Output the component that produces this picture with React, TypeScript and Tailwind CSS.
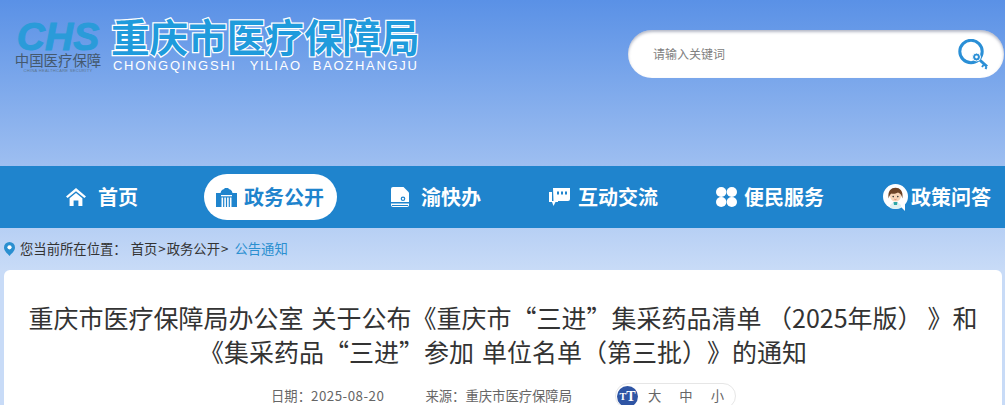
import React from "react";

const cjk = "font-['Microsoft_YaHei','Noto_Sans_CJK_SC',sans-serif]";

function HomeIcon() {
  return (
    <svg width="20" height="18" viewBox="0 0 20 18" fill="#fff">
      <path d="M10 0 L20 8.4 L18.4 10 L10 3.2 L1.6 10 L0 8.4 Z" />
      <path d="M3.6 10.2 L10 5 L16.4 10.2 V18 H12.4 V12.6 H7.6 V18 H3.6 Z" />
    </svg>
  );
}
function GovIcon() {
  return (
    <svg width="21" height="19" viewBox="0 0 21 19" fill="#1f84cd">
      <path d="M0 5 H4.5 C5 2 7 .8 10.5 .8 C14 .8 16 2 16.5 5 H21 V19 H0 Z" />
      <path d="M8.5 0 h4 v2 h-4 Z" />
      <g fill="#fff">
        <rect x="5" y="7" width="11" height="1.3" />
        <rect x="5.5" y="9.5" width="1.6" height="9.5" />
        <rect x="8.3" y="9.5" width="1.6" height="9.5" />
        <rect x="11.1" y="9.5" width="1.6" height="9.5" />
        <rect x="13.9" y="9.5" width="1.6" height="9.5" />
      </g>
    </svg>
  );
}
function DocIcon() {
  return (
    <svg width="18" height="20" viewBox="0 0 18 20" fill="#fff">
      <path d="M2 0 H12.5 L18 5.5 V15 H0 V2 A2 2 0 0 1 2 0 Z" />
      <circle cx="12" cy="11.8" r="2.3" fill="#1f84cd" />
      <circle cx="12" cy="11.8" r="1.1" fill="#fff" />
      <path d="M0 16.5 H18 V18 A2 2 0 0 1 16 20 H2 A2 2 0 0 1 0 18 Z" />
      <rect x="1" y="18" width="16" height="1" fill="#1f84cd" />
    </svg>
  );
}
function ChatIcon() {
  return (
    <svg width="21" height="18" viewBox="0 0 21 18" fill="#fff">
      <path d="M4 0 H21 V11 A2 2 0 0 1 19 13 H10 L4.5 13 Z" />
      <path d="M0 4 H3 V13 L9 13 L9 14 H6.5 L4.5 18 L3 14 H0 Z" />
      <rect x="8" y="3.5" width="2" height="3" fill="#1f84cd" />
      <rect x="12" y="3.5" width="2" height="3" fill="#1f84cd" />
      <rect x="16" y="3.5" width="2" height="3" fill="#1f84cd" />
    </svg>
  );
}
function CloverIcon() {
  return (
    <svg width="21" height="20" viewBox="0 0 21 20" fill="#fff">
      <ellipse cx="5.2" cy="5" rx="5.2" ry="4.9" />
      <ellipse cx="15.8" cy="5" rx="5.2" ry="4.9" />
      <ellipse cx="5.2" cy="15" rx="5.2" ry="4.9" />
      <ellipse cx="15.8" cy="15" rx="5.2" ry="4.9" />
    </svg>
  );
}
function AvatarIcon() {
  return (
    <svg width="25" height="27" viewBox="0 0 25 27">
      <circle cx="12.5" cy="12.5" r="12.5" fill="#fff" />
      <path d="M17 22 L22 27 L22 19 Z" fill="#fff" />
      <path d="M7 21 Q12.5 15 18 21 L18 24 Q12.5 25.5 7 24 Z" fill="#dff1f2" />
      <path d="M10.5 18 L14.5 18 L14 21 L11 21 Z" fill="#2ea7a7" />
      <circle cx="12.5" cy="12" r="5.5" fill="#f8d6b8" />
      <path d="M5.6 14.5 C4.5 7 8 3.8 12.5 3.8 C17 3.8 20.4 7 19.4 14.5 C18.5 11 17 9.2 15 8.6 C12.5 10 9.5 10 8.6 9.5 C7 10.5 6.3 12 5.6 14.5 Z" fill="#6e4326" />
      <circle cx="10.2" cy="12.6" r=".8" fill="#333" />
      <circle cx="14.8" cy="12.6" r=".8" fill="#333" />
      <path d="M11.4 15.2 Q12.5 16.1 13.6 15.2" stroke="#d2664f" strokeWidth=".7" fill="none" />
    </svg>
  );
}
function KeySearchIcon() {
  return (
    <svg width="31" height="31" viewBox="0 0 31 31" fill="none">
      <circle cx="13" cy="12.5" r="11.2" stroke="#2a8fd6" strokeWidth="3" />
      <path d="M19.5 19 L29 27.5" stroke="#2a8fd6" strokeWidth="3" />
      <path d="M25.5 26 L24 28 M28.5 28 L27.5 30" stroke="#2a8fd6" strokeWidth="2" />
      <circle cx="18.5" cy="18" r="4" fill="#2a8fd6" stroke="#fff" strokeWidth="1" />
      <circle cx="18.5" cy="18" r="1.4" fill="#fff" />
    </svg>
  );
}
function PinIcon() {
  return (
    <svg width="11" height="14" viewBox="0 0 11 14">
      <path d="M5.5 0 A5.5 5.5 0 0 1 11 5.5 C11 9 7.5 11.5 5.5 14 C3.5 11.5 0 9 0 5.5 A5.5 5.5 0 0 1 5.5 0 Z" fill="#2a8fd0" />
      <circle cx="5.5" cy="5.3" r="2.1" fill="#fff" />
    </svg>
  );
}

function Logo() {
  return (
    <div className="flex w-[88px] flex-col items-center">
      <div className="h-[30px] w-[88px]">
        <span className="block text-center text-[39px] font-bold italic leading-[30px] text-[#2a9bd9] [-webkit-text-stroke:1px_#2a9bd9] font-['Liberation_Sans',sans-serif]">
          CHS
        </span>
      </div>
      <span className={`whitespace-nowrap text-[14.4px] leading-[16px] text-[#44596e] ${cjk}`}>
        中国医疗保障
      </span>
      <span className="whitespace-nowrap text-[4px] leading-[5px] tracking-[0.3px] text-[#5b7590] font-['Liberation_Sans',sans-serif]">
        CHINA HEALTHCARE SECURITY
      </span>
    </div>
  );
}

const navItems: { label: string; icon: React.ReactNode; w: string; gap: string }[] = [
  { label: "首页", icon: <HomeIcon />, w: "w-[72px]", gap: "gap-[12px]" },
  { label: "渝快办", icon: <DocIcon />, w: "w-[90px]", gap: "gap-[12px]" },
  { label: "互动交流", icon: <ChatIcon />, w: "w-[109px]", gap: "gap-[8px]" },
  { label: "便民服务", icon: <CloverIcon />, w: "w-[109px]", gap: "gap-[7px]" },
  { label: "政策问答", icon: <AvatarIcon />, w: "w-[108px]", gap: "gap-[3px]" },
];

function NavItem({ item }: { item: (typeof navItems)[number] }) {
  return (
    <div className={`flex items-center whitespace-nowrap text-[20px] font-bold text-white ${item.w} ${item.gap}`}>
      <span className="flex shrink-0">{item.icon}</span>
      <span>{item.label}</span>
    </div>
  );
}

export default function App() {
  return (
    <div className={`flex h-[405px] w-[1005px] flex-col overflow-hidden bg-[linear-gradient(180deg,#5a91e6_0px,#c8dbf7_270px)] ${cjk}`}>
      <header className="flex h-[166px] shrink-0 items-start pl-[14px] pr-[1px]">
        <div className="mt-[22px]">
          <Logo />
        </div>
        <div className="ml-[9px] mt-[12px] flex w-[312px] flex-col">
          <div className="whitespace-nowrap text-[38.6px] font-bold leading-[47px] text-[#1f9bdc] [-webkit-text-stroke:2.5px_#ffffff] [paint-order:stroke_fill]">
            重庆市医疗保障局
          </div>
          <div className="whitespace-nowrap pl-[2px] text-[13px] leading-[14px] tracking-[1.7px] text-white font-['Liberation_Sans',sans-serif]">
            <span>CHONGQINGSHI</span>
            <span className="ml-[13px]">YILIAO</span>
            <span className="ml-[11px]">BAOZHANGJU</span>
          </div>
        </div>
        <div className="ml-auto mt-[30px] flex h-[48px] w-[376px] items-center justify-between rounded-[24px] bg-white pl-[25px] pr-[15px] shadow-[inset_0_2px_3px_rgba(90,100,130,0.45)]">
          <span className="text-[12px] text-[#808080]">请输入关键词</span>
          <KeySearchIcon />
        </div>
      </header>

      <nav className="flex h-[62px] shrink-0 items-center bg-[#1f84cd] pl-[66px]">
        <NavItem item={navItems[0]} />
        <div className="ml-[66px] flex h-[46px] w-[133px] items-center gap-[7px] whitespace-nowrap rounded-[23px] bg-white pl-[12px] text-[20px] font-bold text-[#1f84cd]">
          <GovIcon />
          <span>政务公开</span>
        </div>
        <div className="ml-[54px]">
          <NavItem item={navItems[1]} />
        </div>
        <div className="ml-[68px]">
          <NavItem item={navItems[2]} />
        </div>
        <div className="ml-[58px]">
          <NavItem item={navItems[3]} />
        </div>
        <div className="ml-[58px]">
          <NavItem item={navItems[4]} />
        </div>
      </nav>

      <div className="flex h-[42px] shrink-0 items-center whitespace-nowrap pl-[4px] text-[13.33px] text-[#333333]">
        <PinIcon />
        <span className="ml-[5px]">您当前所在位置：</span>
        <span className="ml-[4px]">
          首页<span className="px-[1px]">&gt;</span>政务公开<span className="px-[1px]">&gt;</span>
        </span>
        <span className="ml-[5px] text-[13.33px] text-[#2a8fd0]">公告通知</span>
      </div>

      <main className="ml-[4px] mr-[3px] flex grow flex-col items-center rounded-t-[6px] bg-white">
        <h1 className="mt-[30px] w-[960px] text-center text-[25px] font-normal leading-[34px] text-[#333333] [word-spacing:2.5px] [text-spacing-trim:space-all]">
          重庆市医疗保障局办公室 关于公布《重庆市“三进”集采药品清单
          <span className="[word-spacing:0px]"> （2025年版）</span>
          <span className="ml-[5px]">》</span>和《集采药品“三进”参加 单位名单（第三批）》的通知
        </h1>
        <div className="mt-[15px] flex w-[998px] items-center text-[13.33px] text-[#666666]">
          <span className="ml-[267px]">
            日期：<span className="tracking-[0.5px]">2025-08-20</span>
          </span>
          <span className="ml-[41px]">来源：重庆市医疗保障局</span>
          <div className="ml-[43px] flex h-[26px] w-[121px] shrink-0 items-center rounded-full border border-[#e6e6e6] pl-[1px]">
            <span className="flex h-[21px] w-[21px] items-center justify-center rounded-full bg-[#2f55a4] text-[14px] font-bold text-white font-['Liberation_Serif',serif]">
              <span className="text-[10px]">T</span>T
            </span>
            <span className="ml-[10px]">大</span>
            <span className="ml-[18px]">中</span>
            <span className="ml-[18px]">小</span>
          </div>
        </div>
      </main>
    </div>
  );
}
